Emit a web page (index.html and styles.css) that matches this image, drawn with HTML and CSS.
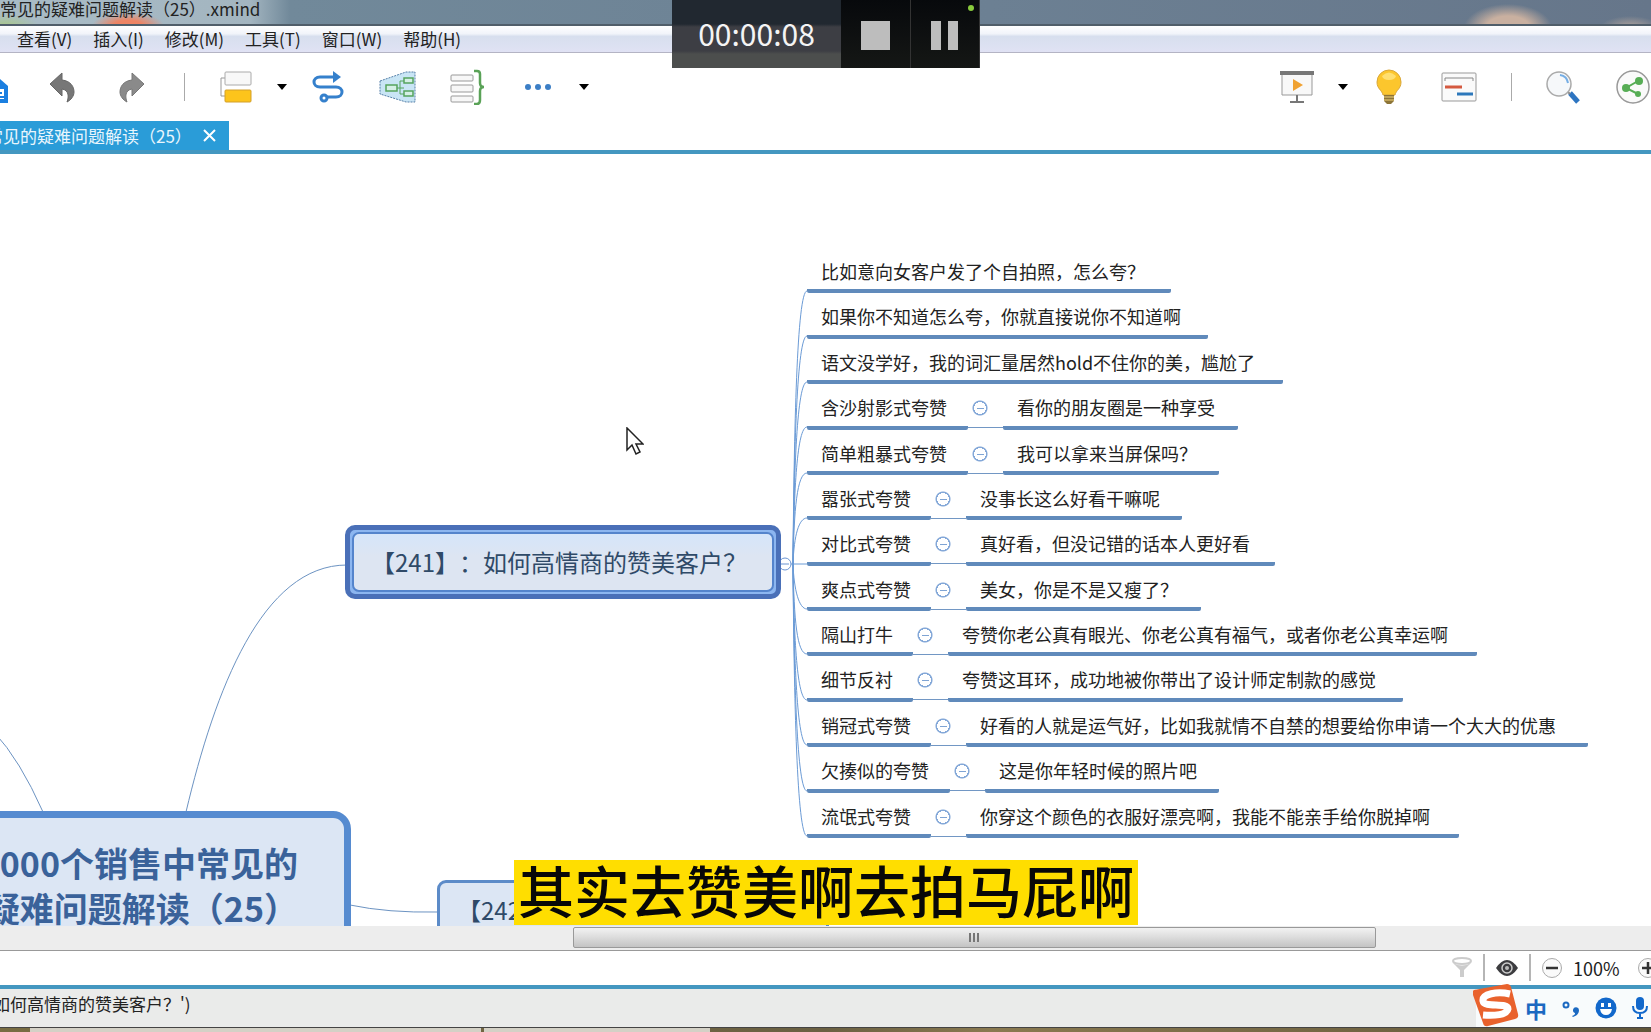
FILE: index.html
```html
<!DOCTYPE html>
<html lang="zh-CN">
<head>
<meta charset="utf-8">
<title>XMind</title>
<link rel="stylesheet" href="styles.css">
</head>
<body>
<header class="titlebar"><span>常见的疑难问题解读（25）.xmind</span></header>

<nav class="menubar">
  <button>查看(V)</button><button>插入(I)</button><button>修改(M)</button><button>工具(T)</button><button>窗口(W)</button><button>帮助(H)</button>
</nav>

<div class="toolbar">
  <div class="tools tools-left">
    <button class="tool" aria-label="主页"><svg width="34" height="36" viewBox="0 0 34 36"><path d="M1 17 17 3l16 14v17H1z" fill="#1b7fe0"/><path d="M20 20h9v10h-9z" fill="#fff"/><path d="M22 23h5v2h-5zM24 27h5v2h-5z" fill="#1b7fe0"/></svg></button>
    <button class="tool" aria-label="撤销"><svg width="28" height="34" viewBox="0 0 28 34"><path d="M2 14 14 3v7c9 1 12 7 12 12 0 4-3 8-7 10 2-5 2-12-5-13v7z" fill="#777" stroke="#666" stroke-linejoin="round"/></svg></button>
    <button class="tool" aria-label="重做"><svg width="28" height="34" viewBox="0 0 28 34"><path d="M26 14 14 3v7C5 11 2 17 2 22c0 4 3 8 7 10-2-5-2-12 5-13v7z" fill="#8a8a8a" stroke="#777" stroke-linejoin="round"/></svg></button>
    <span class="sep"></span>
    <button class="tool" aria-label="主题"><svg width="34" height="34" viewBox="0 0 34 34"><path d="M7 8H2v18h5" fill="none" stroke="#999"/><rect x="6" y="2" width="26" height="13" rx="1" fill="#f8f8f8" stroke="#aaa"/><rect x="6" y="20" width="26" height="12" rx="1" fill="#fdc41b" stroke="#d3a02b"/></svg></button>
    <button class="caret" aria-label="更多主题"><svg width="10" height="6"><path d="M0 0h10L5 6z"/></svg></button>
    <button class="tool" aria-label="联系"><svg width="34" height="34" viewBox="0 0 34 34" fill="none" stroke="#3580cc" stroke-width="3"><path d="M23 7H9c-8 0-8 10 0 10h16c8 0 8 10 0 10h-9"/><path d="m22 1 8 6-8 6z" fill="#3580cc" stroke="none"/><circle cx="13" cy="28" r="3"/></svg></button>
    <button class="tool" aria-label="外框"><svg width="38" height="34" viewBox="0 0 38 34"><path d="M1 11 27 2h9v30h-9L1 24z" fill="#c9e5f5" stroke="#557fa8" stroke-dasharray="2 1"/><path d="M17 18h8m-4-7v13m0-13h4m-4 13h4" stroke="#55a45d" fill="none"/><path d="M7 15h11v6H7zM25 8h9v5h-9zM25 21h9v5h-9z" fill="#d5efe6" stroke="#55a45d" stroke-width="1.5"/></svg></button>
    <button class="tool" aria-label="概要"><svg width="36" height="36" viewBox="0 0 36 36"><g fill="#f7f7f7" stroke="#999"><rect x="1" y="6" width="22" height="6" rx="1"/><rect x="1" y="16" width="22" height="7" rx="1"/><rect x="1" y="27" width="22" height="6" rx="1"/></g><path d="M24 2h3q3 0 3 3v9q0 4 4 4-4 0-4 4v9q0 4-3 4h-3" fill="none" stroke="#5aa257" stroke-width="2.5"/></svg></button>
    <button class="tool" aria-label="更多"><svg width="28" height="8" fill="#3c7fc6"><circle cx="4" cy="4" r="3"/><circle cx="14" cy="4" r="3"/><circle cx="24" cy="4" r="3"/></svg></button>
    <button class="caret" aria-label="更多工具"><svg width="10" height="6"><path d="M0 0h10L5 6z"/></svg></button>
  </div>
  <div class="tools tools-right">
    <button class="tool" aria-label="演示"><svg width="36" height="36" viewBox="0 0 36 36"><path d="M3 5h30v21H3z" fill="#f8f8f8" stroke="#999"/><path d="M1 2h34v4H1z" fill="#777"/><path d="m14 10 10 6-10 6z" fill="#f0a232"/><path d="M18 26v7m-7 0h14" stroke="#777" stroke-width="2"/></svg></button>
    <button class="caret" aria-label="演示选项"><svg width="10" height="6"><path d="M0 0h10L5 6z"/></svg></button>
    <button class="tool" aria-label="头脑风暴"><svg width="28" height="36" viewBox="0 0 28 36"><path d="M14 1a12 12 0 0 0-12 12c0 7 5 8 6 13h12c1-5 6-6 6-13A12 12 0 0 0 14 1z" fill="#fcc62d" stroke="#d9a73a"/><path d="M7 7q7-7 14 0-1 4-7 4T7 7z" fill="#ffdf70"/><path d="M9 26h10v6l-3 3h-4l-3-3z" fill="#8c7437"/><path d="M9 28h10M9 31h10" stroke="#f1d27a"/></svg></button>
    <button class="tool" aria-label="甘特图"><svg width="36" height="30" viewBox="0 0 36 30"><rect x="1" y="1" width="34" height="28" rx="1" fill="#fafafa" stroke="#999"/><path d="M4 9V6h28v3" fill="none" stroke="#888"/><path d="M4 15h17" stroke="#d4593f" stroke-width="3"/><path d="M16 22h16" stroke="#2d78bb" stroke-width="3"/></svg></button>
    <span class="sep"></span>
    <button class="tool" aria-label="搜索"><svg width="34" height="34" viewBox="0 0 34 34"><path d="m24 23 8 9" stroke="#2d75c1" stroke-width="5"/><path d="m20 20 4 4" stroke="#888" stroke-width="2"/><circle cx="13" cy="14" r="12" fill="#f6f8fa" stroke="#aaa" stroke-width="1.5"/><path d="M14 5q7 1 8 8" fill="none" stroke="#75aee5" stroke-width="2"/></svg></button>
    <button class="tool" aria-label="分享"><svg width="36" height="36" viewBox="0 0 36 36"><circle cx="18" cy="18" r="16" fill="#fafafa" stroke="#999" stroke-width="1.5"/><path d="M23 12 11 19l12 6" fill="none" stroke="#57ad55" stroke-width="2"/><g fill="#57ad55"><circle cx="24" cy="12" r="4"/><circle cx="11" cy="19" r="4"/><circle cx="23" cy="25" r="3"/></g></svg></button>
  </div>
</div>

<div class="tabs"><div class="tab"><span>常见的疑难问题解读（25）</span><button aria-label="关闭"><svg width="13" height="13"><path d="m1 1 11 11M12 1 1 12" stroke="#fff" stroke-width="2"/></svg></button></div></div>

<main class="canvas">
  <svg class="links" width="1651" height="772" viewBox="0 154 1651 772" aria-hidden="true">
    <g stroke="#6c93c2">
      <path d="M-6 732Q20 760 43 812"/><path d="M186 812C215 690 262 565 347 565"/><path d="M350 905Q388 913 438 912"/>
    </g>
    <g stroke="#6b9bd6">
      <path d="M793 564C794 430 797 291 807 291"/><path d="M793 564C794 450 797 336 807 336"/><path d="M793 564C794 470 797 382 807 382"/><path d="M793 564C794 490 797 427 807 427"/><path d="M793 564C794 510 797 473 807 473"/><path d="M793 564C794 535 799 518 807 518"/>
      <path d="M781 564H807"/>
      <path d="M793 564C794 590 799 609 807 609"/><path d="M793 564C794 620 797 654 807 654"/><path d="M793 564C794 640 797 700 807 700"/><path d="M793 564C794 660 797 745 807 745"/><path d="M793 564C794 680 797 791 807 791"/><path d="M793 564C794 700 797 836 807 836"/>
    </g>
    <g stroke="#6b95d3"><circle cx="785" cy="564" r="6" fill="#fff"/><path d="M781 564h8"/></g>
  </svg>
  <div class="node root">000个销售中常见的<br>疑难问题解读（25）</div>
  <div class="node selected"><div class="inner">【241】：如何高情商的赞美客户？</div></div>
  <div class="node next">【242】</div>
  <ul class="branches">
    <li><span class="topic" style="width:364px">比如意向女客户发了个自拍照，怎么夸？</span></li>
    <li><span class="topic" style="width:401px">如果你不知道怎么夸，你就直接说你不知道啊</span></li>
    <li><span class="topic" style="width:476px">语文没学好，我的词汇量居然hold不住你的美，尴尬了</span></li>
    <li><span class="topic" style="width:161px">含沙射影式夸赞</span><button class="fold" aria-label="折叠"></button><span class="topic" style="width:235px">看你的朋友圈是一种享受</span></li>
    <li><span class="topic" style="width:161px">简单粗暴式夸赞</span><button class="fold" aria-label="折叠"></button><span class="topic" style="width:216px">我可以拿来当屏保吗？</span></li>
    <li><span class="topic" style="width:124px">嚣张式夸赞</span><button class="fold" aria-label="折叠"></button><span class="topic" style="width:216px">没事长这么好看干嘛呢</span></li>
    <li><span class="topic" style="width:124px">对比式夸赞</span><button class="fold" aria-label="折叠"></button><span class="topic" style="width:309px">真好看，但没记错的话本人更好看</span></li>
    <li><span class="topic" style="width:124px">爽点式夸赞</span><button class="fold" aria-label="折叠"></button><span class="topic" style="width:235px">美女，你是不是又瘦了？</span></li>
    <li><span class="topic" style="width:106px">隔山打牛</span><button class="fold" aria-label="折叠"></button><span class="topic" style="width:529px">夸赞你老公真有眼光、你老公真有福气，或者你老公真幸运啊</span></li>
    <li><span class="topic" style="width:106px">细节反衬</span><button class="fold" aria-label="折叠"></button><span class="topic" style="width:455px">夸赞这耳环，成功地被你带出了设计师定制款的感觉</span></li>
    <li><span class="topic" style="width:124px">销冠式夸赞</span><button class="fold" aria-label="折叠"></button><span class="topic" style="width:622px">好看的人就是运气好，比如我就情不自禁的想要给你申请一个大大的优惠</span></li>
    <li><span class="topic" style="width:143px">欠揍似的夸赞</span><button class="fold" aria-label="折叠"></button><span class="topic" style="width:234px">这是你年轻时候的照片吧</span></li>
    <li><span class="topic" style="width:124px">流氓式夸赞</span><button class="fold" aria-label="折叠"></button><span class="topic" style="width:493px">你穿这个颜色的衣服好漂亮啊，我能不能亲手给你脱掉啊</span></li>
  </ul>
  <svg class="cursor" width="18" height="29" viewBox="0 0 18 29"><path d="M1 1v22l5-5 4 9 4-2-4-8h7z" fill="#fff" stroke="#222" stroke-width="1.5"/></svg>
  <p class="caption">其实去赞美啊去拍马屁啊</p>
</main>

<div class="scroll"><div class="thumb"><svg width="12" height="9"><path d="M1 0v9M5 0v9M9 0v9" stroke="#777" stroke-width="2"/></svg></div></div>

<div class="viewbar">
  <button aria-label="筛选"><svg width="22" height="22" viewBox="0 0 22 22"><ellipse cx="11" cy="4" rx="9" ry="3" fill="#fff" stroke="#ccc" stroke-width="2"/><path d="m2 6 7 7v7h4v-7l7-7q-9 5-18 0z" fill="#ccc"/></svg></button>
  <span class="rule"></span>
  <button aria-label="显示"><svg width="24" height="20" viewBox="0 0 24 20"><path d="M1 10Q12-6 23 10 12 26 1 10z" fill="#3c3c3f"/><circle cx="12" cy="10" r="5" fill="none" stroke="#ccc" stroke-width="1.5"/><circle cx="12" cy="10" r="2" fill="#bbb"/></svg></button>
  <span class="rule"></span>
  <button aria-label="缩小"><svg width="22" height="22" viewBox="0 0 22 22"><circle cx="11" cy="11" r="9.5" fill="#fafafa" stroke="#aaa"/><path d="M5 11h12" stroke="#333" stroke-width="2.5"/></svg></button>
  <span class="percent">100%</span>
  <button aria-label="放大"><svg width="22" height="22" viewBox="0 0 22 22"><circle cx="11" cy="11" r="9.5" fill="#fafafa" stroke="#aaa"/><path d="M5 11h12M11 5v12" stroke="#333" stroke-width="2.5"/></svg></button>
</div>

<footer class="status">
  <span class="message">如何高情商的赞美客户？')</span>
  <div class="ime">
    <svg class="sogou" width="46" height="44" viewBox="0 0 46 44"><path d="m1 7 33-6q3 0 4 3l7 27q1 4-3 5l-27 7q-4 1-5-3L0 12q-1-4 1-5z" fill="#e9622d"/><path d="M37 11C24 8 9 11 10 18c1 7 25 1 25 8-1 6-14 7-25 6" fill="none" stroke="#fff" stroke-width="7"/></svg>
    <button class="lang">中</button>
    <button aria-label="标点"><svg width="20" height="20" viewBox="0 0 20 20"><circle cx="5" cy="7" r="2.5" fill="none" stroke="#1b69c1" stroke-width="2"/><path d="M11 18c3-1 3-2 3-3a3 3 0 1 1 4-3c0 4-3 6-6 7z" fill="#1b69c1"/></svg></button>
    <button aria-label="表情"><svg width="22" height="22" viewBox="0 0 22 22"><circle cx="11" cy="11" r="10.5" fill="#1268cb"/><path d="M6 6h3v4H6zM13 6h3v4h-3zM5 12h12q-1 6-6 6t-6-6z" fill="#fff"/></svg></button>
    <button aria-label="语音"><svg width="18" height="24" viewBox="0 0 18 24"><rect x="5" y="1" width="8" height="13" rx="4" fill="#1268cb"/><path d="M2 10q0 7 7 7t7-7M9 17v4M6 22h6" fill="none" stroke="#1268cb" stroke-width="2"/></svg></button>
  </div>
</footer>
<div class="taskbar"><span class="task task-a"></span><span class="task task-b"></span></div>

<div class="recorder">
  <span class="time">00:00:08</span>
  <button aria-label="停止"><svg width="29" height="29"><path d="M0 0h29v29H0z" fill="#bdbdbd"/></svg></button>
  <button aria-label="暂停"><svg width="28" height="29"><path d="M0 0h10v29H0zM17 0h10v29H17z" fill="#bdbdbd"/></svg></button>
  <i class="live"></i>
</div>
</body>
</html>
```
FILE: styles.css
```css
* { box-sizing: border-box; }
body {
  margin: 0;
  height: 100vh;
  display: flex;
  flex-direction: column;
  overflow: hidden;
  background: #fff;
  color: #222;
  font-family: "Noto Sans CJK SC", sans-serif;
  font-size: 17px;
  line-height: 24px;
  white-space: nowrap;
  text-spacing-trim: space-all;
}
button {
  display: flex;
  align-items: center;
  justify-content: center;
  padding: 0;
  border: 0;
  background: none;
  color: inherit;
  font: inherit;
}
svg { display: block; flex: none; }

.titlebar {
  flex: none;
  height: 26px;
  line-height: 18px;
  border-bottom: 2px solid #505e6a;
  background:
    radial-gradient(ellipse 36px 14px at 128px 26px, #ee8464 40%, transparent),
    radial-gradient(ellipse 34px 12px at 5px 26px, #a9c88a, transparent),
    radial-gradient(ellipse 44px 24px at 1508px 28px, #c9b0a0 50%, transparent),
    radial-gradient(ellipse 30px 12px at 1630px 28px, #b5a79e, transparent),
    linear-gradient(90deg, #a9bcc6 0, #a3b5c0 250px, #71899a 290px, #6c8093 60%, #66768a);
}
.menubar {
  flex: none;
  display: flex;
  gap: 21px;
  height: 27px;
  padding-left: 17px;
  border-bottom: 1px solid #b4b4c4;
  background: linear-gradient(#fff 0, #f1f4fa 30%, #d7dfee 40%, #e0e2f4);
}

.toolbar {
  flex: none;
  display: flex;
  justify-content: space-between;
  height: 68px;
}
.tools { display: flex; align-items: center; }
.tools-left { margin-left: -43px; }
.tools-right { margin-right: -17px; }
.tool { width: 70px; height: 40px; }
.caret { width: 22px; height: 40px; }
.sep { width: 34px; height: 28px; background: linear-gradient(#aaa, #aaa) center / 1px 100% no-repeat; }

.tabs { flex: none; height: 33px; border-bottom: 4px solid #4497c0; }
.tab {
  display: flex;
  align-items: center;
  justify-content: space-between;
  width: 229px;
  height: 29px;
  padding-right: 13px;
  background: #2a9cd8;
  color: #e9f6fd;
}
.tab span { margin-left: -14px; }

.canvas { position: relative; flex: 1; min-height: 0; overflow: hidden; }
.links { position: absolute; left: 0; top: 0; fill: none; }
.node { position: absolute; background: #dce6f4; }
.root {
  left: -40px;
  top: 657px;
  width: 391px;
  height: 150px;
  padding: 22px 46px 0 0;
  border: 7px solid #568bd0;
  border-radius: 18px;
  color: #3a629a;
  font-size: 34px;
  font-weight: 700;
  line-height: 45px;
  text-align: right;
}
.selected {
  left: 345px;
  top: 371px;
  width: 436px;
  height: 74px;
  padding: 2px;
  border: 5px solid #4a70b8;
  border-radius: 10px;
  background: #8cb6f0;
}
.inner {
  height: 60px;
  padding-left: 17px;
  border: 2px solid #5484cc;
  border-radius: 7px;
  background: linear-gradient(#d5e5fa, #dde5f2 40%);
  color: #2f4a68;
  font-size: 24px;
  line-height: 56px;
}
.next {
  left: 437px;
  top: 726px;
  width: 392px;
  height: 74px;
  padding-left: 17px;
  border: 3px solid #5c8bc8;
  border-radius: 9px;
  color: #2f4a68;
  font-size: 24px;
  line-height: 54px;
}
.branches {
  position: absolute;
  left: 807px;
  top: 94px;
  height: 590px;
  margin: 0;
  padding: 0;
  display: grid;
  grid-auto-rows: 1fr;
  list-style: none;
}
.branches li { display: flex; }
.topic {
  padding: 9px 0 0 14px;
  border-bottom: 4px solid #608abb;
  border-radius: 2px;
  font-size: 18px;
  line-height: 28px;
}
.fold {
  width: 35px;
  background:
    linear-gradient(#7fa4d4, #7fa4d4) 9px 24px / 7px 1px no-repeat,
    radial-gradient(circle at 12px 24px, transparent 6px, #84a8d8 6px 7px, transparent 8px),
    linear-gradient(#7297c4, #7297c4) 0 43px / 35px 1px no-repeat;
}
.cursor { position: absolute; left: 626px; top: 273px; }
.caption {
  position: absolute;
  left: 514px;
  bottom: 1px;
  margin: 0;
  padding: 0 4px 8px;
  background: #ffde00;
  color: #080808;
  font-size: 56px;
  font-weight: 500;
  line-height: 57px;
}

.scroll {
  flex: none;
  height: 25px;
  padding: 1px 275px 2px 573px;
  border-bottom: 1px solid #999;
  background: #ededed;
}
.thumb {
  display: flex;
  justify-content: center;
  height: 21px;
  padding-top: 5px;
  border: 1px solid #999;
  border-radius: 2px;
  background: linear-gradient(#f2f2f2, #dedede 45%, #c3c3c3);
}

.viewbar {
  flex: none;
  display: flex;
  align-items: center;
  justify-content: flex-end;
  gap: 10px;
  height: 33px;
  margin: 0 -8px 1px 0;
}
.rule { width: 2px; height: 27px; background: #b5b5b5; }
.percent { width: 54px; font-size: 18px; }

.status {
  flex: none;
  display: flex;
  justify-content: space-between;
  height: 42px;
  border-top: 4px solid #4497c0;
  background: #eaebea;
}
.message { margin-left: -7px; line-height: 30px; }
.ime {
  display: flex;
  align-items: center;
  gap: 14px;
  padding-right: 2px;
  background: #f8fbfc;
}
.sogou { margin: -6px -8px 0 -3px; }
.lang { color: #1b69c1; font-size: 22px; font-weight: 700; }

.taskbar {
  flex: none;
  display: flex;
  gap: 3px;
  height: 5px;
  padding-left: 30px;
  border-top: 1px solid #444;
  background: linear-gradient(90deg, #786c42, #6b6042 50%, #8a7950 60%, #605538);
}
.task { background: #d4d1c6; }
.task-a { width: 451px; }
.task-b { width: 226px; }

.recorder {
  position: absolute;
  left: 672px;
  top: 0;
  display: flex;
  width: 308px;
  height: 68px;
  background: linear-gradient(#212830 0 24px, #3d3e44 27px 51px, #4c4e4d 54px);
}
.time {
  width: 169px;
  color: #f4f4f4;
  font-size: 30px;
  line-height: 66px;
  text-align: center;
}
.recorder button {
  flex: 1;
  padding-top: 3px;
  border-right: 1px solid #333;
  background: linear-gradient(#07090c, #151715);
}
.live {
  position: absolute;
  right: 6px;
  top: 5px;
  width: 6px;
  height: 6px;
  border-radius: 50%;
  background: #88ca3c;
}
```
